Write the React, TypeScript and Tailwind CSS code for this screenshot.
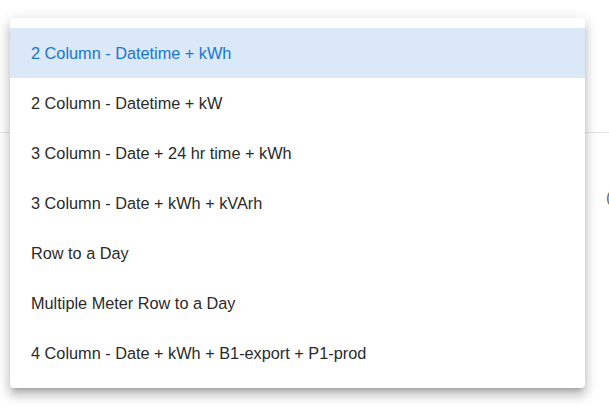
const options = [
  "2 Column - Datetime + kWh",
  "2 Column - Datetime + kW",
  "3 Column - Date + 24 hr time + kWh",
  "3 Column - Date + kWh + kVArh",
  "Row to a Day",
  "Multiple Meter Row to a Day",
  "4 Column - Date + kWh + B1-export + P1-prod",
];

export default function App() {
  const selected = 0;

  return (
    <div
      className="relative h-[407px] w-[609px] overflow-hidden bg-white text-[#212121]"
      style={{ fontFamily: '"Liberation Sans", Arial, sans-serif' }}
    >
      {/* page behind the menu */}
      <div className="h-[133px] border-b border-[#e6e6e6] bg-white" />
      <div className="flex justify-end pt-[53px]">
        <span className="w-[3px] overflow-hidden whitespace-nowrap text-[16px] text-[#666]">(</span>
      </div>

      {/* dropdown menu */}
      <ul
        className="absolute left-[10px] top-[18px] w-[575px] rounded-[4px] bg-white py-[10px]"
        style={{
          boxShadow:
            "0px 5px 5px -3px rgba(0,0,0,0.2), 0px 8px 10px 1px rgba(0,0,0,0.14), 0px 3px 14px 2px rgba(0,0,0,0.12)",
        }}
      >
        {options.map((label, i) => (
          <li
            key={label}
            className={
              i === selected
                ? "flex h-[50px] items-center bg-[#dae8f7] pl-[21px] pt-[1px] text-[16.3px] text-[#1976d2]"
                : "flex h-[50px] items-center pl-[21px] pt-[1px] text-[16.3px] text-[#2b2b2b]"
            }
          >
            {label}
          </li>
        ))}
      </ul>
    </div>
  );
}
